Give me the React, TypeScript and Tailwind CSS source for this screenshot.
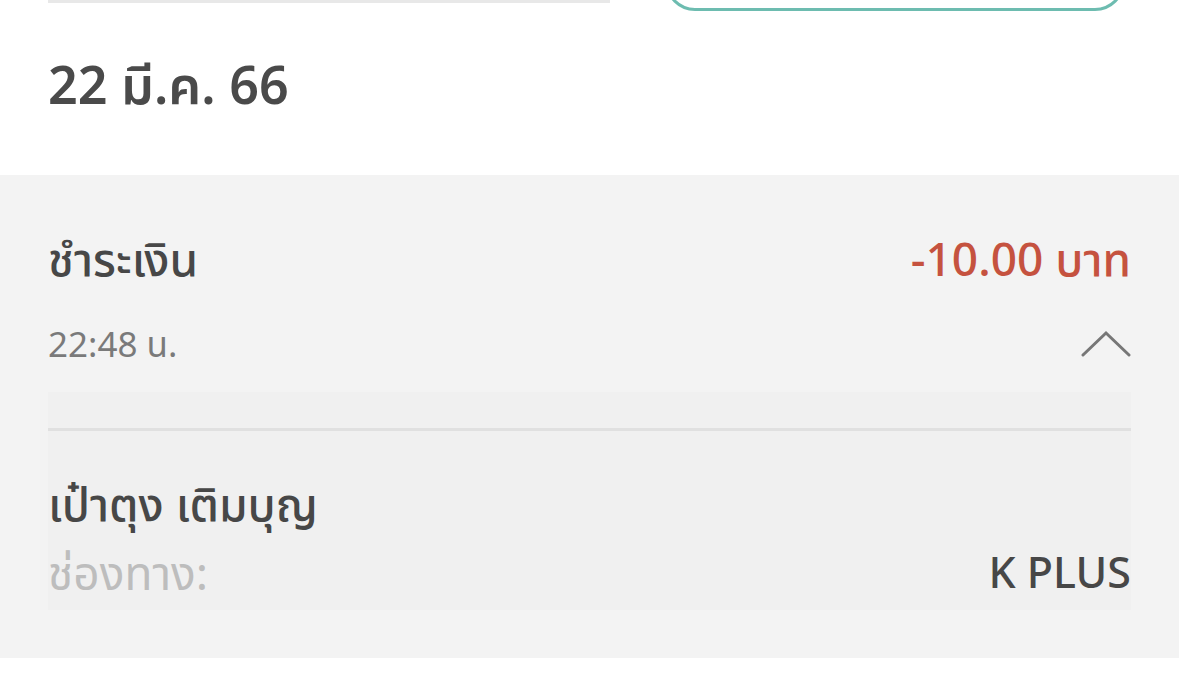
const font = { fontFamily: '"Noto Sans", "Noto Sans Thai", "Liberation Sans", sans-serif' };

function ChevronUp() {
  return (
    <svg width="50" height="28" viewBox="0 0 50 28" fill="none" stroke="#777777" strokeWidth="3" strokeLinecap="round">
      <polyline points="2,25 25,3 48,25" />
    </svg>
  );
}

export default function App() {
  return (
    <div className="w-[1179px] h-[674px] bg-white overflow-hidden" style={font}>
      <div className="flex h-[11px] overflow-hidden px-[48px]">
        <div className="w-[562px] h-[3px] bg-[#e8e8e8]" />
        <div className="ml-[55px] w-[460px] h-[60px] mt-[-49px] shrink-0 border-[3px] border-[#6dbcb0] rounded-[32px]" />
      </div>

      <div className="h-[164px] pl-[48px] pt-[43px]">
        <p className="text-[52px] leading-[60px] font-semibold text-[#4a4a4a]">22 มี.ค. 66</p>
      </div>

      <div className="bg-[#f3f3f3] h-[483px] px-[48px]">
        <div className="flex items-center justify-between pt-[55px]">
          <span className="text-[46px] leading-[56px] font-medium text-[#474747]">ชำระเงิน</span>
          <span className="text-[46px] leading-[56px] font-medium text-[#c5523f]">-10.00 บาท</span>
        </div>
        <div className="flex items-center justify-between mt-[36px] h-[44px]">
          <span className="text-[35px] leading-[44px] text-[#7a7a7a]">22:48 น.</span>
          <ChevronUp />
        </div>

        <div className="mt-[26px] h-[218px] bg-[#f0f0f0] pt-[36px]">
          <div className="h-[3px] bg-[#e0e0e0]" />
          <p className="mt-[44px] text-[46px] leading-[56px] font-medium text-[#474747]">เป๋าตุง เติมบุญ</p>
          <div className="mt-[16px] flex items-center justify-between">
            <span className="text-[46px] leading-[50px] text-[#bdbdbd]">ช่องทาง:</span>
            <span className="text-[43px] leading-[50px] font-medium text-[#474747]">K PLUS</span>
          </div>
        </div>
      </div>
    </div>
  );
}
